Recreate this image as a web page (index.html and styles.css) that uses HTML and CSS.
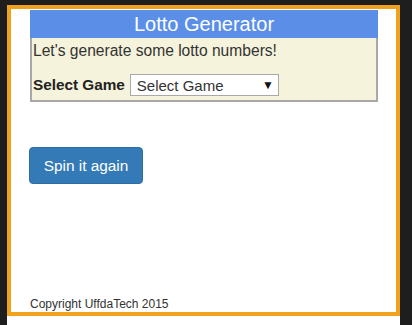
FILE: index.html
```html
<!DOCTYPE html>
<html lang="en">
<head>
<meta charset="utf-8">
<title>Lotto Generator</title>
<link rel="stylesheet" href="styles.css">
</head>
<body>
<div class="page">
  <div class="frame">
    <div class="content">
      <div class="card">
        <h1 class="card-title">Lotto Generator</h1>
        <div class="card-body">
          <p class="intro">Let's generate some lotto numbers!</p>
          <div class="game-row">
            <label class="game-label" for="game">Select Game</label>
            <div class="select-wrap">
              <select id="game" class="game-select">
                <option>Select Game</option>
              </select>
              <span class="select-arrow">&#9660;</span>
            </div>
          </div>
        </div>
      </div>
      <button class="spin-btn" type="button">Spin it again</button>
      <footer class="footer">Copyright UffdaTech 2015</footer>
    </div>
  </div>
</div>
</body>
</html>
```
FILE: styles.css
```css
html, body {
  margin: 0;
  padding: 0;
  background: #1e1e1e;
  height: 100%;
  overflow: hidden;
}

body {
  font-family: "Liberation Sans", Arial, sans-serif;
  color: #333;
}

.page {
  margin: 5px 0 0 7px;
  width: 393px;
  height: 330px;
  background: #ffffff;
}

.frame {
  box-sizing: border-box;
  width: 393px;
  height: 311px;
  border: 4px solid #f0a21e;
  background: #ffffff;
}

.content {
  box-sizing: border-box;
  height: 100%;
  padding: 1px 17px 0 19px;
  display: flex;
  flex-direction: column;
  align-items: flex-start;
}

.card {
  width: 348px;
  align-self: stretch;
}

.card-title {
  margin: 0;
  height: 28px;
  line-height: 28px;
  background: #5b8fe7;
  color: #ffffff;
  font-size: 20px;
  font-weight: normal;
  text-align: center;
}

.card-body {
  background: #f5f3dc;
  border: 2px solid #a8a8a8;
  border-top: none;
  padding: 4px 1px 4px 1px;
}

.intro {
  margin: 0;
  font-size: 15.6px;
  line-height: 17px;
  color: #333;
}

.game-row {
  margin-top: 15px;
  display: flex;
  align-items: center;
  gap: 5px;
}

.game-label {
  font-weight: bold;
  font-size: 15.3px;
  color: #222;
}

.select-wrap {
  position: relative;
  width: 149px;
  height: 22px;
}

.game-select {
  appearance: none;
  -webkit-appearance: none;
  box-sizing: border-box;
  width: 100%;
  height: 100%;
  margin: 0;
  padding: 0 0 0 6px;
  border: 1px solid #a9a9a9;
  border-radius: 0;
  background: #ffffff;
  font-family: "Liberation Sans", Arial, sans-serif;
  font-size: 15px;
  color: #333;
}

.select-arrow {
  position: absolute;
  right: 5px;
  top: 4px;
  font-size: 12px;
  line-height: 14px;
  color: #111;
  pointer-events: none;
}

.spin-btn {
  margin: 45px 0 0 -1px;
  width: 114px;
  height: 37px;
  padding: 0;
  background: #337ab7;
  border: 1px solid #2e6da4;
  border-radius: 4px;
  color: #ffffff;
  font-family: "Liberation Sans", Arial, sans-serif;
  font-size: 15.4px;
}

.footer {
  margin-top: auto;
  margin-bottom: 1px;
  font-size: 12px;
  line-height: 14px;
  color: #333;
}
```
